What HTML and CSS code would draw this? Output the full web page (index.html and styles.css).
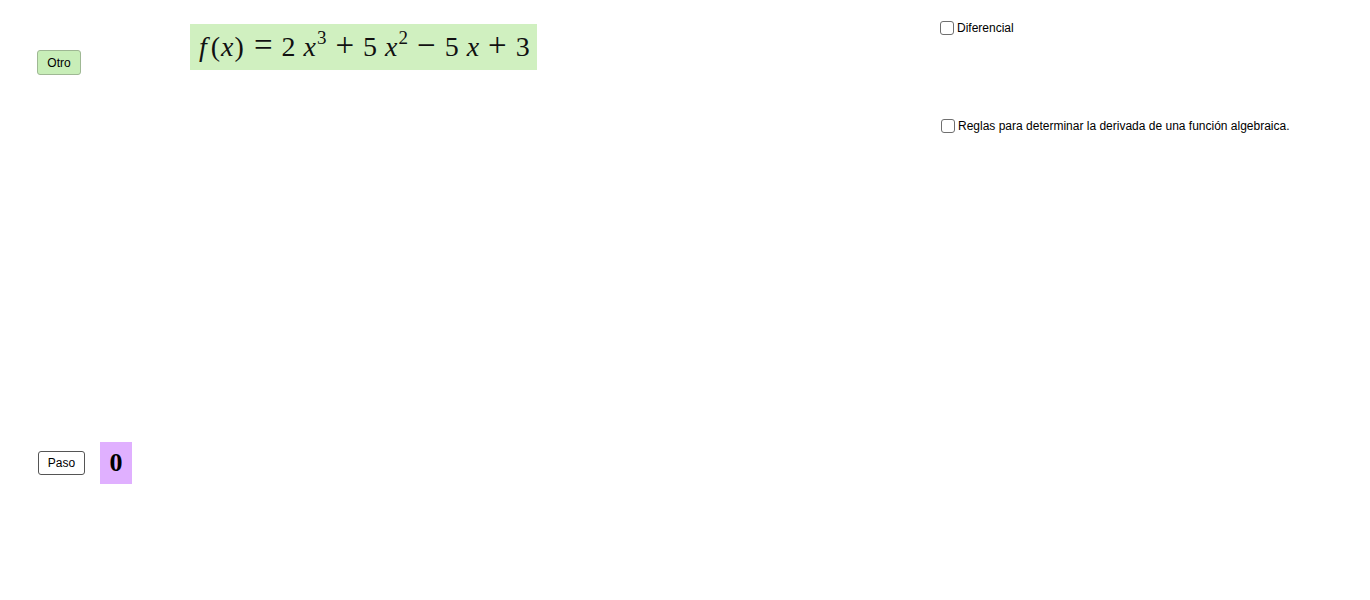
FILE: index.html
```html
<!DOCTYPE html>
<html lang="es">
<head>
<meta charset="utf-8">
<title>Derivada</title>
<link rel="stylesheet" href="styles.css">
</head>
<body>
<div class="applet">
  <div class="top">
    <button class="btn btn-otro">Otro</button>
    <div class="formula"><i class="fn">f</i><span class="paren">(</span><i>x</i><span class="paren">)</span><span class="op">=</span>2<i class="var">x</i><sup>3</sup><span class="op">+</span>5<i class="var">x</i><sup>2</sup><span class="op">&minus;</span>5<i class="var">x</i><span class="op">+</span>3</div>
    <div class="checks">
      <label class="check"><span class="box"></span>Diferencial</label>
      <label class="check check-reglas"><span class="box"></span>Reglas para determinar la derivada de una función algebraica.</label>
    </div>
  </div>
  <div class="bottom">
    <button class="btn btn-paso">Paso</button>
    <div class="step">0</div>
  </div>
</div>
</body>
</html>
```
FILE: styles.css
```css
html, body {
  margin: 0;
  padding: 0;
  background: #ffffff;
}
.applet {
  width: 1370px;
  height: 600px;
  font-family: "Liberation Sans", Arial, sans-serif;
  color: #000;
}
.top {
  display: flex;
  align-items: flex-start;
}
.btn {
  font-family: "Liberation Sans", Arial, sans-serif;
  font-size: 12px;
  color: #000;
  border-radius: 3px;
  padding: 0;
  box-sizing: border-box;
}
.btn-otro {
  margin-left: 37px;
  margin-top: 50px;
  width: 44px;
  height: 25px;
  background: #c8eeb8;
  border: 1px solid #9fb894;
}
.formula {
  margin-left: 109px;
  margin-top: 24px;
  width: 347px;
  height: 46px;
  box-sizing: border-box;
  background: #d0f0c0;
  font-family: "Liberation Serif", "Times New Roman", serif;
  font-size: 28px;
  line-height: 43px;
  padding-left: 9px;
  white-space: nowrap;
  color: #111;
}
.formula i {
  font-style: italic;
}
.formula .fn {
  margin-right: 3px;
}
.formula .paren {
  margin: 0 1px;
}
.formula .var {
  margin-left: 8px;
}
.formula sup {
  font-size: 19px;
  line-height: 0;
  vertical-align: 12px;
  margin-left: 1px;
}
.formula .op {
  font-size: 33px;
  margin: 0 9px;
}
.checks {
  margin-left: 403px;
  margin-top: 19px;
  display: flex;
  flex-direction: column;
  align-items: flex-start;
}
.check {
  display: flex;
  align-items: center;
  gap: 3px;
  font-size: 12px;
  height: 18px;
  white-space: nowrap;
}
.check-reglas {
  margin-top: 80px;
  margin-left: 1px;
}
.box {
  width: 12px;
  height: 12px;
  border: 1px solid #6f6f6f;
  border-radius: 3px;
  background: #fff;
}
.bottom {
  display: flex;
  align-items: center;
  margin-top: 307px;
}
.btn-paso {
  margin-left: 38px;
  width: 47px;
  height: 24px;
  background: #ffffff;
  border: 1px solid #555;
}
.step {
  margin-left: 15px;
  width: 32px;
  height: 42px;
  background: #e0b0ff;
  font-family: "Liberation Serif", "Times New Roman", serif;
  font-weight: bold;
  font-size: 26px;
  line-height: 42px;
  text-align: center;
}
```
